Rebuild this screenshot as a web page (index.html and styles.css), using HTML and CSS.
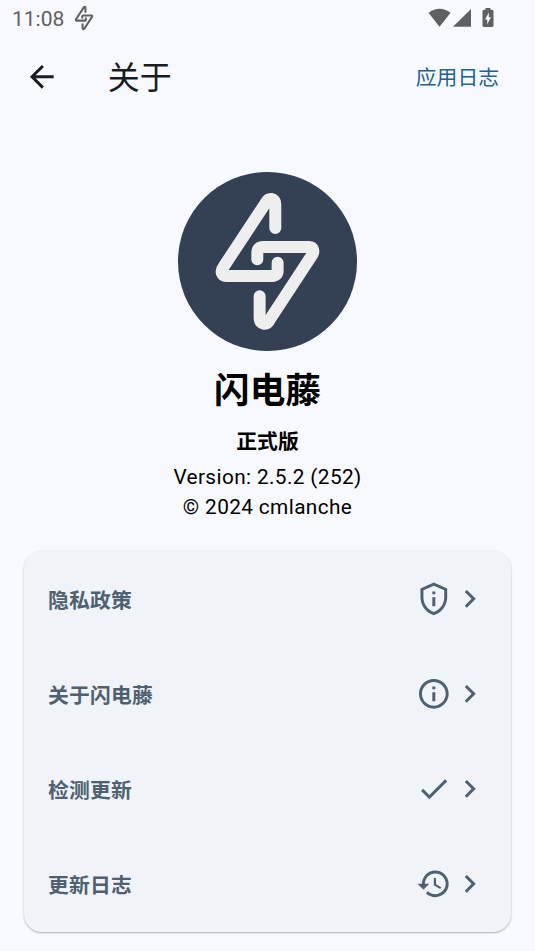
FILE: index.html
```html
<!DOCTYPE html>
<html lang="zh-CN">
<head>
<meta charset="utf-8">
<title>关于</title>
<link rel="stylesheet" href="styles.css">
</head>
<body>
<svg class="defs" aria-hidden="true">
  <symbol id="bolt" viewBox="24 21 536 536">
    <path d="M316 189V117C316 98 296 98 289 111L161 305C149 320 157 333 168 333H307Q323 333 323 317V293M262 283V264Q262 246 280 246H417C430 246 435 259 424 274L300 463C291 483 269 479 269 461V394"/>
  </symbol>
  <symbol id="chevron" viewBox="0 0 24 24"><path d="M10 6L8.59 7.41 13.17 12l-4.58 4.59L10 18l6-6z"/></symbol>
</svg>
<div class="status">
  <span class="clock">11:08</span>
  <svg class="status-bolt"><use href="#bolt"/></svg>
  <svg class="signals" viewBox="0 0 68 22">
    <path d="M0.5 4.8Q11.5-3.4 22.6 4.8L11.5 18.8zM25 18.8L43 1V18.8z"/>
    <path fill-rule="evenodd" d="M57.500 0h5v1.700h1.500q1.500 0 1.500 1.500v14.200q0 1.500-1.500 1.500h-8q-1.500 0-1.500-1.500v-14.200q0-1.500 1.500-1.500h1.500zM60.800 4.500l-3.800 7h2.200v4.700l3.800-6.900h-2.200z"/>
  </svg>
</div>
<header class="bar">
  <svg class="icon back" viewBox="0 0 24 24"><path d="M20 11H7.830l5.590-5.590L12 4l-8 8 8 8 1.410-1.410L7.830 13H20z"/></svg>
  <h1>关于</h1>
  <a class="log">应用日志</a>
</header>
<main>
  <section class="about">
    <div class="logo"><svg><use href="#bolt"/></svg></div>
    <h2>闪电藤</h2>
    <h3>正式版</h3>
    <p>Version: 2.5.2 (252)</p>
    <p>© 2024 cmlanche</p>
  </section>
  <section class="card">
    <div class="row"><span>隐私政策</span>
      <svg class="icon" viewBox="0 0 24 24"><path fill-rule="evenodd" d="M12 1L3 5v6c0 5.550 3.840 10.740 9 12 5.160-1.260 9-6.450 9-12V5zM12 3.190l7 3.110V11c0 4.520-2.980 8.690-7 9.930C7.980 19.690 5 15.520 5 11V6.300zM11 7h2v2h-2zM11 11h2v6h-2z"/></svg>
      <svg class="icon"><use href="#chevron"/></svg></div>
    <div class="row"><span>关于闪电藤</span>
      <svg class="icon" viewBox="0 0 24 24"><path d="M11 7h2v2h-2zm0 4h2v6h-2zm1-9C6.480 2 2 6.480 2 12s4.480 10 10 10 10-4.480 10-10S17.520 2 12 2zm0 18c-4.410 0-8-3.590-8-8s3.590-8 8-8 8 3.590 8 8-3.590 8-8 8z"/></svg>
      <svg class="icon"><use href="#chevron"/></svg></div>
    <div class="row"><span>检测更新</span>
      <svg class="icon" viewBox="0 0 24 24"><path d="M9 16.170L4.830 12l-1.420 1.410L9 19 21 7l-1.410-1.410z"/></svg>
      <svg class="icon"><use href="#chevron"/></svg></div>
    <div class="row"><span>更新日志</span>
      <svg class="icon" viewBox="0 0 24 24"><path d="M13 3c-4.970 0-9 4.030-9 9H1l3.890 3.890.07.14L9 12H6c0-3.870 3.130-7 7-7s7 3.130 7 7-3.130 7-7 7c-1.930 0-3.680-.79-4.940-2.060l-1.420 1.420C8.270 19.990 10.510 21 13 21c4.970 0 9-4.030 9-9s-4.030-9-9-9zm-1 5v5l4.280 2.540.72-1.210-3.500-2.080V8z"/></svg>
      <svg class="icon"><use href="#chevron"/></svg></div>
  </section>
</main>
</body>
</html>
```

FILE: styles.css
```css
* { box-sizing: border-box; }
body {
  margin: 0;
  height: 951px;
  overflow: hidden;
  background: #f8f9ff;
  color: #000;
  font-family: Roboto, "Noto Sans CJK SC", sans-serif;
}
h1, h2, h3, p { margin: 0; }
svg { display: block; flex: none; }
.defs { position: absolute; width: 0; height: 0; }
.icon { width: 35.67px; height: 35.67px; fill: currentColor; }
.status {
  display: flex;
  align-items: center;
  height: 36px;
  padding: 0 39px 0 12px;
  color: #5f6062;
}
.clock { width: 52px; padding-top: 2px; font-size: 21px; font-weight: 450; white-space: nowrap; }
.status-bolt {
  width: 32px;
  height: 32px;
  margin-left: 4px;
  fill: none;
  stroke: currentColor;
  stroke-width: 34;
  stroke-linecap: round;
}
.signals { width: 68px; height: 22px; margin: 2px 0 0 auto; fill: currentColor; }
.bar {
  display: flex;
  align-items: center;
  height: 82px;
  padding: 0 36px 0 24px;
  color: #181c20;
}
.bar h1 {
  margin-left: 48px;
  padding-top: 1px;
  font-size: 32px;
  font-weight: 400;
  line-height: 40px;
}
.log {
  margin-left: auto;
  padding-top: 2px;
  color: #236190;
  font-size: 20.8px;
  line-height: 30px;
}
.about {
  display: flex;
  flex-direction: column;
  align-items: center;
  height: 433.4px;
  padding-top: 54px;
  text-align: center;
}
.logo {
  width: 178.6px;
  height: 178.6px;
  border-radius: 50%;
  background: #344054;
}
.logo svg {
  width: 100%;
  height: 100%;
  fill: none;
  stroke: #eee;
  stroke-width: 36;
  stroke-linecap: round;
}
.about h2 {
  margin-top: 15px;
  font-size: 35.67px;
  line-height: 50px;
}
.about h3 {
  margin-top: 11px;
  font-size: 20.8px;
  line-height: 30px;
}
.about p {
  font-size: 20.8px;
  line-height: 30px;
  letter-spacing: .37px;
}
.about h3 + p { margin-top: 5px; }
.card {
  margin: 0 24px;
  border-radius: 18px;
  background: #f0f4f9;
  color: #4f6070;
  box-shadow: 0 1px 2px rgba(0, 0, 0, .3);
}
.row {
  display: flex;
  align-items: center;
  height: 95.1px;
  padding: 0 23.6px 0 24px;
}
.row span {
  margin-right: auto;
  padding-top: 4px;
  font-size: 20.8px;
  font-weight: 700;
  line-height: 30px;
  letter-spacing: .2px;
}
```
